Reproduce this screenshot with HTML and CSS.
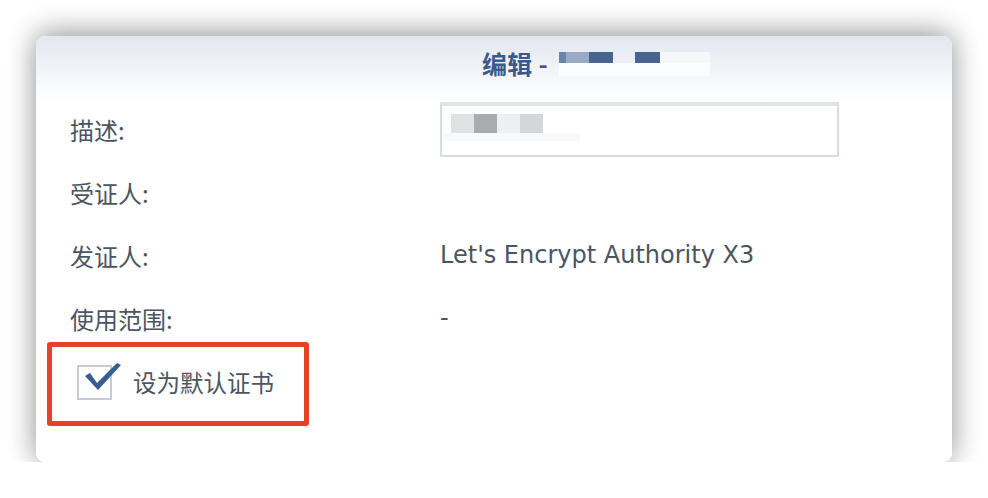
FILE: index.html
```html
<!DOCTYPE html>
<html lang="zh-CN">
<head>
<meta charset="utf-8">
<title>编辑</title>
<link rel="stylesheet" href="styles.css">
</head>
<body>
<div class="dialog">
  <div class="header">
    <span class="title">编辑 -</span>
    <span class="redact-title">
      <span class="rt-row">
        <i class="b1"></i><i class="b2"></i><i class="b3"></i><i class="b4"></i><i class="b5"></i><i class="b6"></i>
      </span>
      <span class="rt-under"></span>
    </span>
  </div>
  <div class="form">
    <div class="label">描述:</div>
    <div class="value">
      <div class="input">
        <span class="ri-row"><i class="c1"></i><i class="c2"></i><i class="c3"></i><i class="c4"></i></span>
        <span class="ri-under"></span>
      </div>
    </div>
    <div class="label">受证人:</div>
    <div class="value"></div>
    <div class="label">发证人:</div>
    <div class="value text">Let's Encrypt Authority X3</div>
    <div class="label">使用范围:</div>
    <div class="value text">-</div>
  </div>
  <div class="highlight">
    <span class="checkbox">
      <svg width="42" height="40" viewBox="0 0 42 40" class="check">
        <path d="M4 17 L9 14 L16 24 L36 4 L40 6 L17 31 Z" fill="#3a5d91"/>
      </svg>
    </span>
    <span class="check-label">设为默认证书</span>
  </div>
</div>
</body>
</html>
```
FILE: styles.css
```css
html, body {
  margin: 0;
  padding: 0;
  background: #ffffff;
}
body {
  padding: 36px 36px 0 36px;
  font-family: "DejaVu Sans", "Noto Sans CJK SC", sans-serif;
}
.dialog {
  width: 916px;
  height: 426px;
  border-radius: 9px;
  background: linear-gradient(to bottom, #e2e7ef 0px, #f2f4f8 35px, #fbfcfd 55px, #ffffff 68px, #ffffff 100%);
  box-shadow: 0 -5px 28px rgba(0, 0, 0, 0.3), 0 4px 30px rgba(0, 0, 0, 0.18);
  box-sizing: border-box;
}
.header {
  height: 73px;
  display: flex;
  align-items: flex-start;
  padding-left: 446px;
  padding-top: 11px;
  box-sizing: border-box;
}
.title {
  font-family: "Noto Sans CJK SC", sans-serif;
  font-weight: 700;
  font-size: 25px;
  line-height: 32px;
  color: #3b5a8a;
  letter-spacing: 0.3px;
}
.redact-title {
  display: flex;
  flex-direction: column;
  margin-left: 11px;
  margin-top: 5px;
  width: 151px;
}
.rt-row {
  display: flex;
  height: 11px;
}
.rt-row i { display: block; height: 11px; }
.rt-row .b1 { width: 7px; background: #6d84aa; }
.rt-row .b2 { width: 23px; background: #9aaac4; }
.rt-row .b3 { width: 24px; background: #4a6491; }
.rt-row .b4 { width: 22px; background: #eceef3; }
.rt-row .b5 { width: 25px; background: #4a6491; }
.rt-row .b6 { width: 50px; background: #f6f7f9; }
.rt-under {
  display: block;
  height: 13px;
  background: #fbfcfd;
}
.form {
  display: grid;
  grid-template-columns: 370px 1fr;
  grid-template-rows: 40px 40px 40px 40px;
  row-gap: 23px;
  padding-left: 34px;
  margin-bottom: 4px;
}
.label, .value {
  display: flex;
  align-items: center;
}
.label {
  font-family: "Noto Sans CJK SC", sans-serif;
  font-size: 24px;
  color: #4b5561;
}
.text {
  font-family: "DejaVu Sans", sans-serif;
  font-size: 24px;
  color: #4b5561;
}
.input {
  width: 399px;
  height: 55px;
  box-sizing: border-box;
  border: 2px solid #d6dce3;
  border-top: 4px solid #dfe4ea;
  background: #ffffff;
  padding: 8px 0 0 9px;
  display: flex;
  flex-direction: column;
  flex-shrink: 0;
}
.ri-row { display: flex; height: 19px; }
.ri-row i { display: block; width: 23px; height: 19px; }
.ri-row .c1 { background: #e1e2e4; }
.ri-row .c2 { background: #a9abaf; }
.ri-row .c3 { background: #eeeff0; }
.ri-row .c4 { background: #d5d6d8; }
.ri-under {
  display: block;
  width: 136px;
  height: 8px;
  margin-left: -7px;
  background: #f8f9fa;
}
.highlight {
  margin-left: 11px;
  width: 262px;
  height: 84px;
  box-sizing: border-box;
  border: 5px solid #e8412b;
  border-radius: 3px;
  display: flex;
  align-items: center;
  padding-left: 25px;
  padding-bottom: 4px;
}
.checkbox {
  position: relative;
  width: 35px;
  height: 35px;
  box-sizing: border-box;
  border: 2px solid #c6ccd6;
  background: #ffffff;
  flex-shrink: 0;
}
.check {
  position: absolute;
  left: 2px;
  top: -8px;
}
.check-label {
  margin-left: 21px;
  font-family: "Noto Sans CJK SC", sans-serif;
  font-size: 23.5px;
  color: #4b5561;
}
```
